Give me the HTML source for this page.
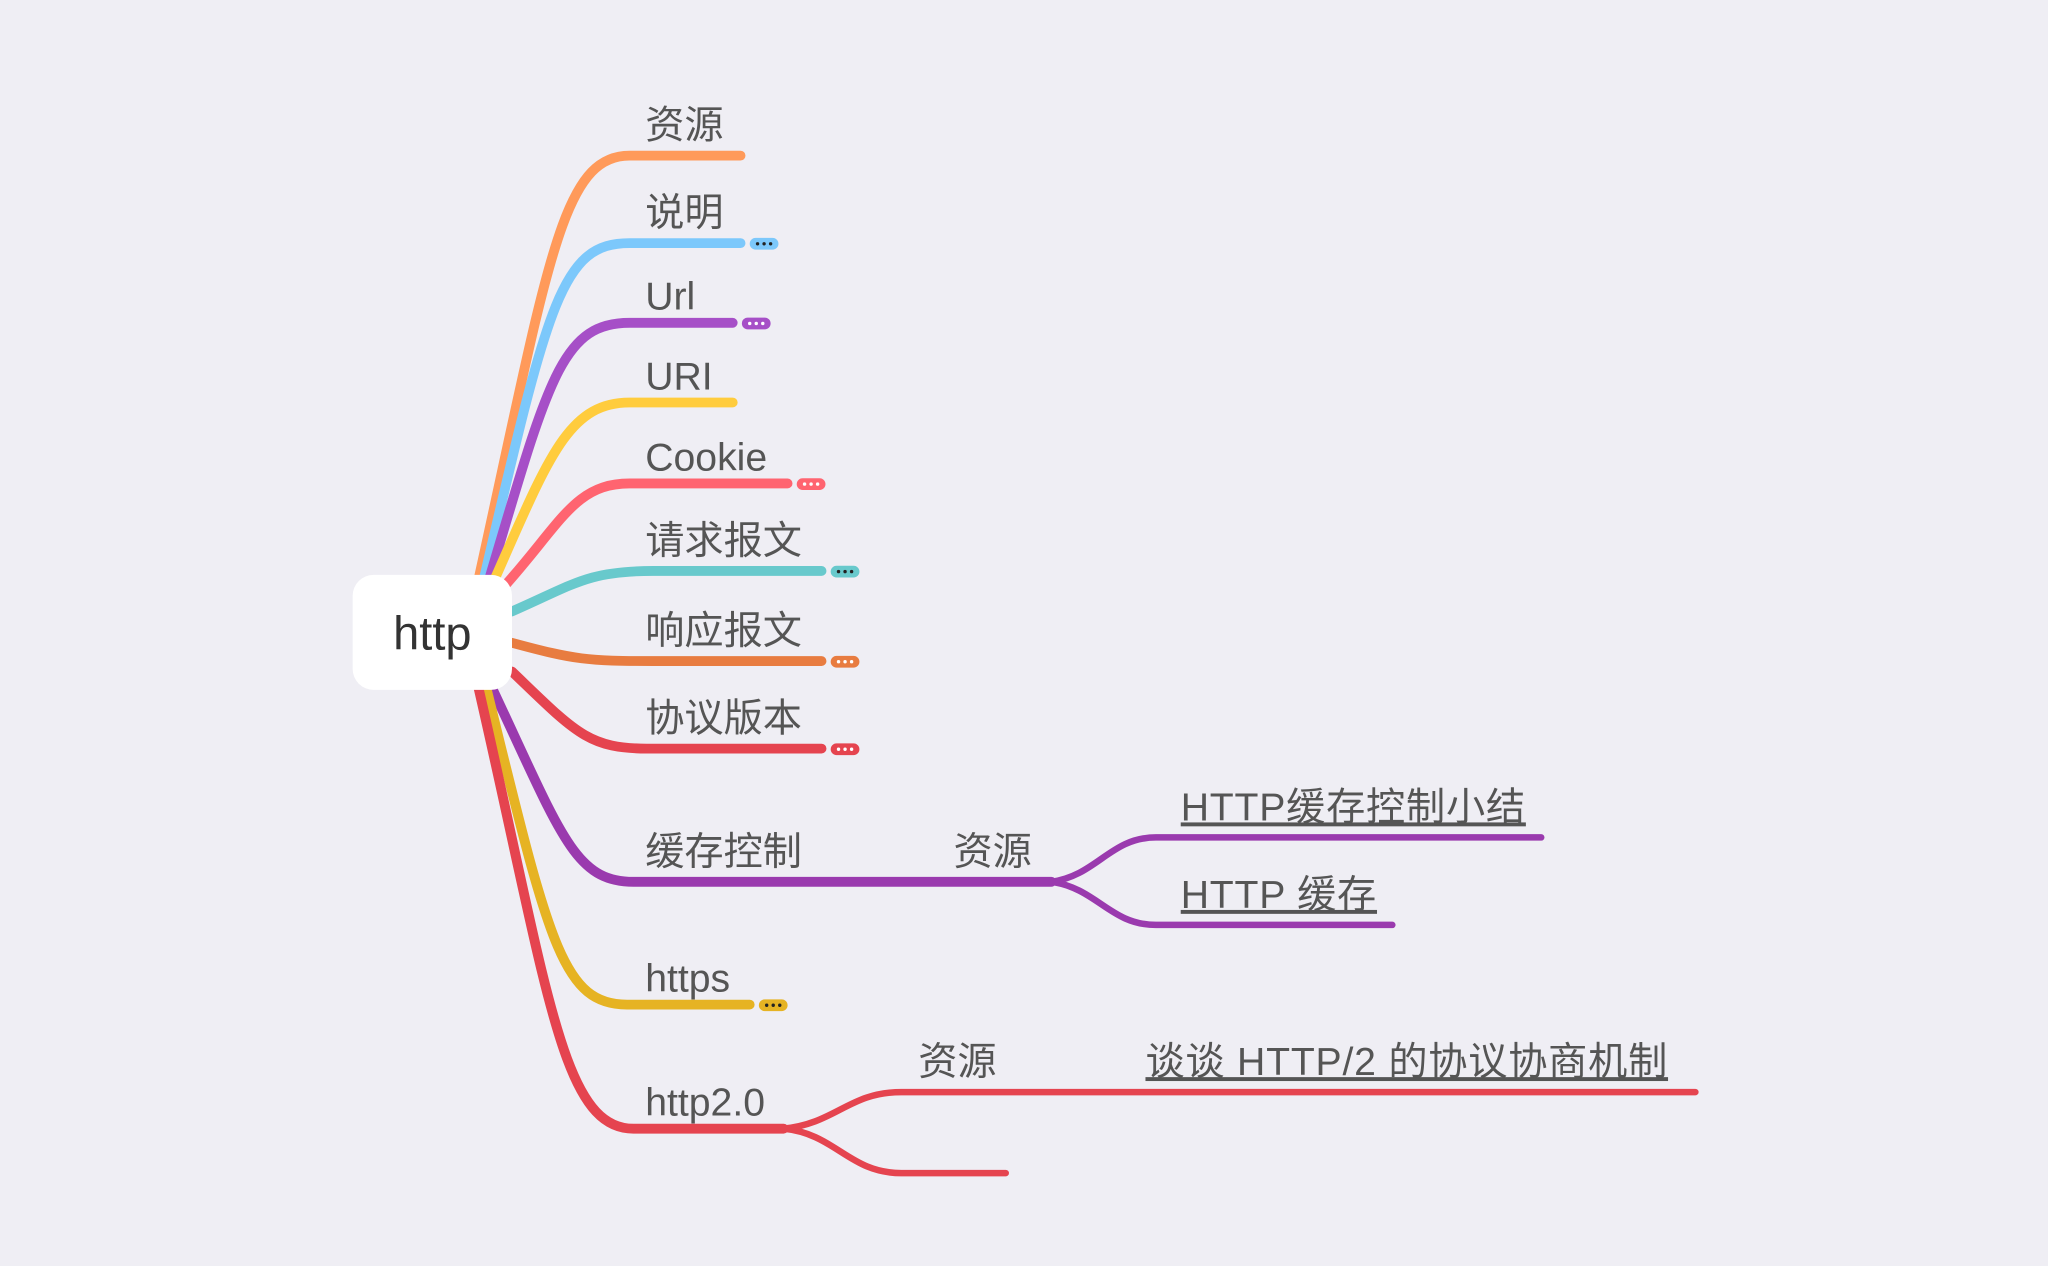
<!DOCTYPE html>
<html><head><meta charset="utf-8"><style>
html,body{margin:0;padding:0;background:#efeef4;}
svg{display:block}
text{font-family:"Liberation Sans","Noto Sans CJK SC",sans-serif;fill:#555;font-size:30px}
text.l{letter-spacing:0.6px}
</style></head><body>
<svg width="2048" height="1266" viewBox="0 0 1568 969" xmlns="http://www.w3.org/2000/svg">
<rect width="1568" height="969" fill="#efeef4"/>
<g fill="none" stroke-linecap="round" stroke-width="7.5">
<path d="M366,445 C420,200 430,119 482,119 L567,119" stroke="#ff9a5a"/>
<path d="M370,445 C420,230 430,186 482,186 L567,186" stroke="#7cc8fb"/>
<path d="M374,445 C420,290 430,247 482,247 L561,247" stroke="#a64fc7"/>
<path d="M378,445 C420,350 435,308 482,308 L561,308" stroke="#ffcc3d"/>
<path d="M385,450 C430,400 440,370 482,370 L603,370" stroke="#ff6470"/>
<path d="M392,468 C440,447 450,437 500,437 L629,437" stroke="#68c9cc"/>
<path d="M392,492 C440,505 450,506 500,506 L629,506" stroke="#e87c40"/>
<path d="M392,514 C440,560 450,573 495,573 L629,573" stroke="#e5444f"/>
<path d="M376,525 C430,640 440,675 485,675 L805,675" stroke="#9a3aae"/>
<path d="M372,525 C420,720 430,769 480,769 L574,769" stroke="#e6b323"/>
<path d="M366,525 C420,760 430,864 485,864 L600,864" stroke="#e5444f"/>
</g>
<g fill="none" stroke-linecap="round" stroke-width="5">
<path d="M805,675 C840,670 850,641 885,641 L1180,641" stroke="#9a3aae"/>
<path d="M805,675 C840,680 850,708 885,708 L1066,708" stroke="#9a3aae"/>
<path d="M600,864 C640,860 650,836 690,836 L1298,836" stroke="#e5444f"/>
<path d="M600,864 C640,868 650,898 690,898 L770,898" stroke="#e5444f"/>
</g>
<rect x="270" y="440" width="122" height="88" rx="16" fill="#fff"/>
<text x="331" y="497" text-anchor="middle" style="font-size:36px;fill:#333">http</text>
<g>
<text x="494" y="106">资源</text>
<text x="494" y="173">说明</text>
<text x="494" y="237">Url</text>
<text x="494" y="298">URI</text>
<text x="494" y="360">Cookie</text>
<text x="494" y="424">请求报文</text>
<text x="494" y="493">响应报文</text>
<text x="494" y="560">协议版本</text>
<text x="494" y="662">缓存控制</text>
<text x="730" y="662">资源</text>
<text x="494" y="759">https</text>
<text x="494" y="854">http2.0</text>
<text x="703" y="823">资源</text>
<text class="l" x="904" y="628" text-decoration="underline">HTTP缓存控制小结</text>
<text class="l" x="904" y="695" text-decoration="underline">HTTP 缓存</text>
<text class="l" x="877" y="823" text-decoration="underline">谈谈 HTTP/2 的协议协商机制</text>
</g>
<g>
<rect x="574" y="182" width="22" height="9" rx="4.5" fill="#7cc8fb"/>
<rect x="568" y="243" width="22" height="9" rx="4.5" fill="#a64fc7"/>
<rect x="610" y="366" width="22" height="9" rx="4.5" fill="#ff6470"/>
<rect x="636" y="433" width="22" height="9" rx="4.5" fill="#68c9cc"/>
<rect x="636" y="502" width="22" height="9" rx="4.5" fill="#e87c40"/>
<rect x="636" y="569" width="22" height="9" rx="4.5" fill="#e5444f"/>
<rect x="581" y="765" width="22" height="9" rx="4.5" fill="#e6b323"/>
</g>
<g fill="#222">
<circle cx="580" cy="186.5" r="1.3"/><circle cx="585" cy="186.5" r="1.3"/><circle cx="590" cy="186.5" r="1.3"/>
<circle cx="642" cy="437.5" r="1.3"/><circle cx="647" cy="437.5" r="1.3"/><circle cx="652" cy="437.5" r="1.3"/>
<circle cx="587" cy="769.5" r="1.3"/><circle cx="592" cy="769.5" r="1.3"/><circle cx="597" cy="769.5" r="1.3"/>
</g>
<g fill="#fff">
<circle cx="574" cy="247.5" r="1.3"/><circle cx="579" cy="247.5" r="1.3"/><circle cx="584" cy="247.5" r="1.3"/>
<circle cx="616" cy="370.5" r="1.3"/><circle cx="621" cy="370.5" r="1.3"/><circle cx="626" cy="370.5" r="1.3"/>
<circle cx="642" cy="506.5" r="1.3"/><circle cx="647" cy="506.5" r="1.3"/><circle cx="652" cy="506.5" r="1.3"/>
<circle cx="642" cy="573.5" r="1.3"/><circle cx="647" cy="573.5" r="1.3"/><circle cx="652" cy="573.5" r="1.3"/>
</g>
</svg>
</body></html>
